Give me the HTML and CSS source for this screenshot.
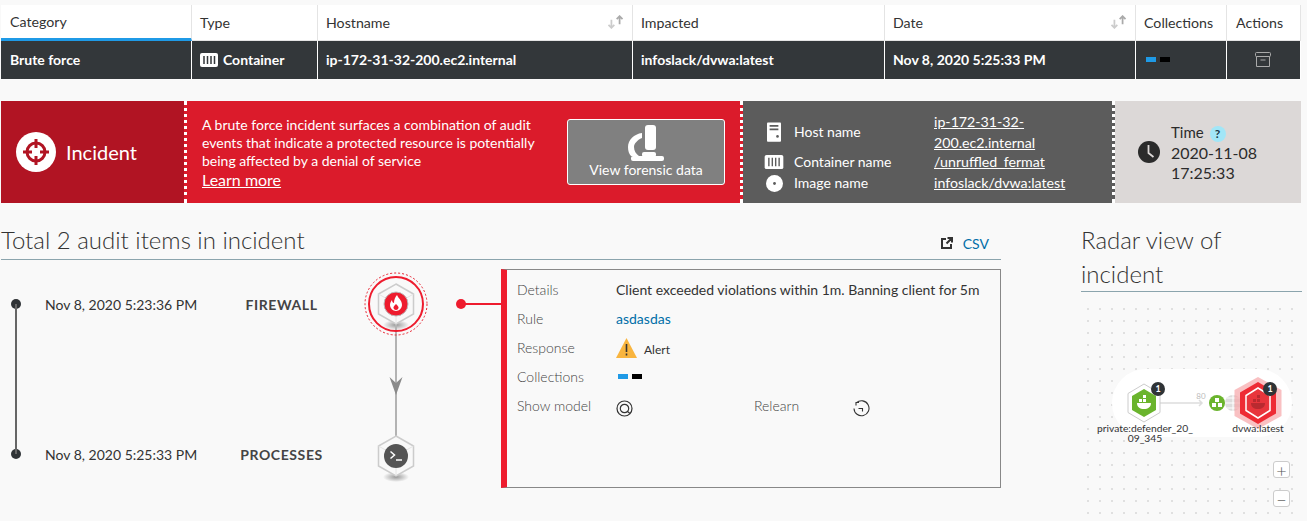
FILE: index.html
```html
<!DOCTYPE html>
<html lang="en">
<head>
    <meta charset="UTF-8">
    <title>Incident</title>
    <link rel="stylesheet" href="styles.css">
</head>
<body>

    <!-- Incident table -->
    <div class="incident-table">
        <div class="cell head active">Category</div>
        <div class="cell head">Type</div>
        <div class="cell head sortable">Hostname
            <svg class="sort-icon" width="17" height="14" viewBox="2 0 13 12"><path d="M5 4v7M2.500 8.500l2.500 2.500 2.500-2.500" fill="none" stroke="#ccc" stroke-width="1.500"/><path d="M12 8V1M9.500 3.500L12 1l2.500 2.500" fill="none" stroke="#aaa" stroke-width="1.500"/></svg>
        </div>
        <div class="cell head">Impacted</div>
        <div class="cell head sortable">Date
            <svg class="sort-icon" width="17" height="14" viewBox="2 0 13 12"><path d="M5 4v7M2.500 8.500l2.500 2.500 2.500-2.500" fill="none" stroke="#ccc" stroke-width="1.500"/><path d="M12 8V1M9.500 3.500L12 1l2.500 2.500" fill="none" stroke="#aaa" stroke-width="1.500"/></svg>
        </div>
        <div class="cell head">Collections</div>
        <div class="cell head last">Actions</div>

        <div class="cell row first">Brute force</div>
        <div class="cell row">
            <svg class="type-icon" width="18" height="14" viewBox="0 0 18 14"><rect width="18" height="14" rx="2" fill="#fff"/><path d="M4 3v8M7.500 3v8M11 3v8M14.500 3v8" stroke="#33373a" stroke-width="1.500"/></svg>
            Container
        </div>
        <div class="cell row">ip-172-31-32-200.ec2.internal</div>
        <div class="cell row">infoslack/dvwa:latest</div>
        <div class="cell row">Nov 8, 2020 5:25:33 PM</div>
        <div class="cell row swatches"><span class="swatch blue"></span><span class="swatch black"></span></div>
        <div class="cell row center">
            <svg width="16" height="15" viewBox="0 0 16 15" fill="none" stroke="#aaa"><rect x="0.500" y="0.500" width="15" height="4" rx="1"/><path d="M1.500 4.500v10h13v-10M5.500 8h5"/></svg>
        </div>
    </div>

    <!-- Incident banner -->
    <div class="banner">
        <div class="banner-title">
            <svg width="40" height="40" viewBox="0 0 40 40">
                <circle cx="20" cy="20" r="20" fill="#fff"/>
                <circle cx="20" cy="20" r="9" fill="none" stroke="#b11423" stroke-width="3"/>
                <path d="M20 7v9M20 24v9M7 20h9M24 20h9" stroke="#b11423" stroke-width="3"/>
            </svg>
            <span>Incident</span>
        </div>
        <div class="banner-desc">
            <div class="desc-text">
                <p>A brute force incident surfaces a combination of audit events that indicate a protected resource is potentially being affected by a denial of service</p>
                <a href="#" class="learn-more">Learn more</a>
            </div>
            <button class="forensic-btn">
                <svg width="36" height="36" viewBox="0 0 36 36" fill="#fff">
                    <rect x="17" y="0" width="11" height="25" rx="3"/>
                    <path d="M14 8v5C9 15 6 19 6 22c0 4 2 7 5 9H3c-2-2-3-5-3-9 0-7 6-13 14-14z"/>
                    <rect x="14" y="27" width="14" height="5" rx="2"/>
                    <rect x="3" y="31" width="33" height="5" rx="2"/>
                </svg>
                View forensic data
            </button>
        </div>
        <div class="banner-info">
            <div class="info-row tall">
                <svg width="14" height="20" viewBox="0 0 16 22"><rect width="16" height="22" rx="1" fill="#fff"/><path d="M3 4h10M3 8h10" stroke="#5c5c5c" stroke-width="2"/><circle cx="12" cy="16" r="1.500" fill="#5c5c5c"/></svg>
                <span class="info-label">Host name</span>
                <a href="#" class="info-value">ip-172-31-32-200.ec2.internal</a>
            </div>
            <div class="info-row">
                <svg width="20" height="14" viewBox="0 0 20 15"><rect width="20" height="15" rx="2" fill="#fff"/><path d="M4.500 3v9M8.200 3v9M11.800 3v9M15.500 3v9" stroke="#5c5c5c" stroke-width="1.500"/></svg>
                <span class="info-label">Container name</span>
                <a href="#" class="info-value">/unruffled_fermat</a>
            </div>
            <div class="info-row">
                <svg width="17" height="17" viewBox="0 0 18 18"><circle cx="9" cy="9" r="9" fill="#fff"/><circle cx="9" cy="9" r="1.500" fill="#5c5c5c"/></svg>
                <span class="info-label">Image name</span>
                <a href="#" class="info-value">infoslack/dvwa:latest</a>
            </div>
        </div>
        <div class="banner-time">
            <svg width="22" height="22" viewBox="0 0 22 22"><circle cx="11" cy="11" r="11" fill="#2b2b2b"/><path d="M10.500 4v8l5 4" fill="none" stroke="#dcd8d7" stroke-width="1.800"/></svg>
            <div>
                <div class="time-label">Time <span class="help">?</span></div>
                <div class="time-value">2020-11-08<br>17:25:33</div>
            </div>
        </div>
    </div>

    <div class="lower">
        <!-- Audit items -->
        <div class="audit">
            <div class="section-head">
                <h2>Total 2 audit items in incident</h2>
                <a href="#" class="csv">
                    <svg width="12" height="12" viewBox="0 0 12 12" fill="none" stroke="#333" stroke-width="2"><path d="M5 2H1v9h9V7M6.500 1H11v4.500M11 1L5.500 6.500"/></svg>
                    CSV
                </a>
            </div>
            <div class="audit-body">
                <div class="audit-rows">
                    <div class="audit-row"><span class="dot"></span><span class="audit-date">Nov 8, 2020 5:23:36 PM</span><span class="audit-type">FIREWALL</span></div>
                    <div class="audit-row"><span class="dot"></span><span class="audit-date">Nov 8, 2020 5:25:33 PM</span><span class="audit-type">PROCESSES</span></div>
                </div>
                <svg class="trail" width="80" height="220" viewBox="0 0 80 220">
                    <defs>
                        <radialGradient id="shade"><stop offset="0" stop-color="#999"/><stop offset="1" stop-color="#999" stop-opacity="0"/></radialGradient>
                    </defs>
                    <ellipse cx="40" cy="56" rx="13" ry="5" fill="url(#shade)"/>
                    <ellipse cx="40" cy="208" rx="13" ry="5" fill="url(#shade)"/>
                    <path d="M40 55v115" stroke="#b3b3b3" stroke-width="2"/>
                    <path d="M33.500 108L40 114l6.500-6L40 126z" fill="#8a8a8a"/>
                    <circle cx="40" cy="35" r="31" fill="none" stroke="#e8202f" stroke-dasharray="2 2"/>
                    <circle cx="40" cy="35" r="27" fill="none" stroke="#ee1c2e" stroke-width="2"/>
                    <polygon points="40,15 57.500,25 57.500,45 40,55 22.500,45 22.500,25" fill="#f9f9f9" stroke="#ccc" stroke-width="1.500"/>
                    <path d="M22.500 25L40 35l17.500-10M40 35v20" fill="none" stroke="#e4e4e4"/>
                    <circle cx="40" cy="35" r="12" fill="#ee1c2e" stroke="#bbb"/>
                    <path d="M41 26c1 3 5 5 5 10 0 3-3 6-6 6s-6-3-6-6c0-2 1-4 2-5 0 2 1 3 2 3 0-3 1-6 3-8z" fill="#fff"/>
                    <path d="M40 41c-1.500 0-2.500-1-2.500-2.500 0-1 1-2 2.500-3.500 1.500 1.500 2.500 2.500 2.500 3.500 0 1.500-1 2.500-2.500 2.500z" fill="#ee1c2e"/>
                    <polygon points="40,167 57.500,177 57.500,197 40,207 22.500,197 22.500,177" fill="#f9f9f9" stroke="#ccc" stroke-width="1.500"/>
                    <path d="M22.500 177l17.500 10 17.500-10M40 187v20" fill="none" stroke="#e4e4e4"/>
                    <circle cx="40" cy="187" r="12" fill="#555"/>
                    <path d="M34.500 182.500l4 3.500-4 3.500" fill="none" stroke="#fff" stroke-width="1.500"/>
                    <path d="M40 191h6" stroke="#fff" stroke-width="1.500"/>
                </svg>
                <div class="connector"><span class="connector-dot"></span></div>
                <div class="details">
                    <span class="detail-label">Details</span>
                    <span class="detail-value wide">Client exceeded violations within 1m. Banning client for 5m</span>
                    <span class="detail-label">Rule</span>
                    <a href="#" class="rule-link wide">asdasdas</a>
                    <span class="detail-label">Response</span>
                    <span class="detail-value wide alert">
                        <svg width="21" height="20" viewBox="0 0 21 20"><polygon points="10.500,0 21,20 0,20" fill="#f9b53f"/><path d="M10.500 6v8M10.500 15.500v2" stroke="#333" stroke-width="1.600"/></svg>
                        <span class="alert-text">Alert</span>
                    </span>
                    <span class="detail-label">Collections</span>
                    <span class="detail-value wide swatch-row"><span class="swatch blue"></span><span class="swatch black"></span></span>
                    <span class="detail-label">Show model</span>
                    <svg class="detail-icon" width="17" height="17" viewBox="0 0 17 17" fill="none" stroke="#333" stroke-width="1.200"><circle cx="8.500" cy="8.500" r="7.500"/><circle cx="8.500" cy="8.500" r="4.200"/><path d="M11.500 11.500l2.500 2"/></svg>
                    <span class="detail-label">Relearn</span>
                    <svg class="detail-icon" width="17" height="17" viewBox="0 0 17 17" fill="none" stroke="#333" stroke-width="1.100"><path d="M3.500 2.700A7.500 7.500 0 1 1 1 8.500"/><path d="M3 5.500V2.500h3M5.500 8.500h4v3"/></svg>
                </div>
            </div>
        </div>

        <!-- Radar -->
        <div class="radar-panel">
            <h2 class="radar-title">Radar view of incident</h2>
            <div class="radar">
                <svg class="radar-graph" width="222" height="214" viewBox="0 0 222 214">
                    <rect x="27" y="64" width="180" height="68" rx="34" fill="#fff"/>
                    <path d="M75 98h42M114 95l3 3-3 3" fill="none" stroke="#ddd" stroke-width="1.500"/>
                    <text x="116" y="94" class="edge-label">80</text>
                    <polygon points="59,79 75,88.500 75,107.500 59,117 43,107.500 43,88.500" fill="none" stroke="#ccc"/>
                    <polygon points="59,84 71,91 71,105 59,112 47,105 47,91" fill="#6ab42d"/>
                    <path d="M52 98h14c0 4-3 6-7 6s-7-2-7-6zM54 94h3v3h-3zM58 94h3v3h-3zM58 90h3v3h-3z" fill="#fff"/>
                    <circle cx="132" cy="98" r="8" fill="#6ab42d"/>
                    <path d="M127 98h4v4h-4zM133 98h4v4h-4zM130 93h4v4h-4z" fill="#fff"/>
                    <circle cx="148" cy="98" r="8" fill="#ddd"/>
                    <path d="M140 98h16M148 90v16M142 93h12M142 103h12" stroke="#fff"/>
                    <polygon points="173,72 196.500,85 196.500,111 173,124 149.500,111 149.500,85" fill="#f6a5a8" opacity="0.700"/>
                    <polygon points="173,77 191,87.500 191,108.500 173,119 155,108.500 155,87.500" fill="#ee2b34"/>
                    <polygon points="173,83 185,90.500 185,105.500 173,113 161,105.500 161,90.500" fill="#e8353c" stroke="#fff" stroke-width="1.500"/>
                    <path d="M166 98h14c0 4-3 6-7 6s-7-2-7-6zM168 94h3v3h-3zM172 94h3v3h-3zM172 90h3v3h-3z" fill="#b92a30"/>
                    <circle cx="73" cy="84" r="7" fill="#2f3336"/>
                    <text x="73" y="87" class="badge-text">1</text>
                    <circle cx="185" cy="84" r="7" fill="#2f3336"/>
                    <text x="185" y="87" class="badge-text">1</text>
                    <text x="60" y="127" class="node-label">private:defender_20_</text>
                    <text x="60" y="137" class="node-label">09_345</text>
                    <text x="173" y="127" class="node-label">dvwa:latest</text>
                </svg>
                <button class="zoom-btn plus">+</button>
                <button class="zoom-btn minus">&minus;</button>
            </div>
        </div>
    </div>

</body>
</html>
```

FILE: styles.css
```css
body {
    font-family: 'Lato', sans-serif;
    background-color: #f9f9f9;
    color: #333;
    margin: 0;
    height: 521px;
    overflow: hidden;
}

/* table */
.incident-table {
    display: grid;
    grid-template-columns: 191px 126px 315px 252px 251px 91px 74px;
    grid-template-rows: 36px 38px;
    margin: 5px 0 0 1px;
    width: 1300px;
}

.cell {
    display: flex;
    align-items: center;
    padding: 0 8px;
    font-size: 14.2px;
    box-sizing: border-box;
    border-right: 1px solid #e4e4e4;
}

.cell:first-child,
.row.first {
    padding-left: 9px;
}

.head {
    background-color: #fff;
    color: #333;
    border-bottom: 1px solid #e4e4e4;
    padding-bottom: 1px;
}

.head.active {
    border-bottom: 3px solid #1f9ae6;
    padding-bottom: 0;
}

.head.last {
    padding-left: 9px;
}

.sortable {
    justify-content: space-between;
}

.row {
    background-color: #33373a;
    color: #fff;
    font-weight: bold;
    font-size: 14px;
    border-right: 1px solid #fff;
    padding-bottom: 2px;
}

.center {
    justify-content: center;
    padding-right: 9px;
}

.type-icon {
    margin: 2px 5px 0 0;
}

.swatches {
    padding-left: 10px;
}

.swatch {
    display: inline-block;
    width: 10px;
    height: 5px;
    margin-right: 4px;
}

.blue {
    background-color: #1f9ae6;
}

.black {
    background-color: #000;
}

/* banner */
.banner {
    display: flex;
    margin: 22px 0 0 1px;
    width: 1300px;
    height: 102px;
    color: #fff;
}

.banner-title {
    width: 183px;
    background-color: #b11423;
    display: flex;
    align-items: center;
    gap: 10px;
    padding-left: 15px;
    box-sizing: border-box;
    font-size: 20px;
}

.banner-desc {
    width: 559px;
    background-color: #db1b2b;
    border-left: 3px dotted #fff;
    border-right: 3px dotted #fff;
    display: flex;
    align-items: center;
    box-sizing: border-box;
    padding: 0 15px 0 15px;
    justify-content: space-between;
}

.desc-text {
    width: 350px;
    font-size: 14px;
    line-height: 18px;
    padding-top: 2px;
}

.desc-text p {
    margin: 0;
}

.learn-more {
    color: #fff;
    font-size: 16px;
    line-height: 20px;
}

.forensic-btn {
    width: 158px;
    height: 66px;
    background-color: #808080;
    border: 1px solid #fff;
    border-radius: 3px;
    color: #fff;
    font-family: inherit;
    font-size: 14px;
    display: flex;
    flex-direction: column;
    align-items: center;
    padding: 5px 0 0;
}

.banner-info {
    width: 372px;
    background-color: #5c5c5c;
    border-right: 3px dotted #fff;
    box-sizing: border-box;
    font-size: 14px;
    display: flex;
    flex-direction: column;
    gap: 3px;
    padding-top: 10px;
}

.info-row {
    display: grid;
    grid-template-columns: 20px 140px 180px;
    padding-left: 21px;
    align-items: center;
    line-height: 18px;
}

.info-row svg {
    justify-self: center;
}

.info-label {
    margin-left: 10px;
}

.info-row.tall {
    line-height: 21px;
    margin-bottom: -3px;
}

.tall .info-label {
    margin-top: -2px;
}

.info-value {
    color: #fff;
    font-size: 14.2px;
    margin-left: 10px;
}

.banner-time {
    flex: 1;
    background-color: #dcd8d7;
    color: #2b2b2b;
    display: flex;
    align-items: center;
    gap: 11px;
    padding-left: 23px;
}

.time-label {
    font-size: 15px;
    line-height: 21px;
}

.help {
    display: inline-block;
    width: 16px;
    height: 16px;
    margin-left: 2px;
    border-radius: 50%;
    background-color: #a2e6f7;
    color: #1a3a4a;
    font-size: 12px;
    font-weight: bold;
    line-height: 16px;
    text-align: center;
}

.time-value {
    font-size: 16px;
    line-height: 20px;
}

/* lower part */
.lower {
    display: flex;
    margin: 8px 0 0 1px;
}

.audit {
    width: 1000px;
}

.section-head {
    display: flex;
    align-items: center;
    justify-content: space-between;
    height: 36px;
    padding-top: 12px;
    border-bottom: 1px solid #8ba4ad;
}

h2 {
    margin: 0;
    font-weight: 300;
    font-size: 24px;
    color: #333;
}

.section-head h2 {
    margin-bottom: 4px;
}

.csv {
    display: flex;
    align-items: center;
    gap: 10px;
    color: #006ea8;
    font-size: 14px;
    margin: 4px 12px 0 0;
    text-decoration: none;
}

.audit-body {
    display: flex;
    height: 220px;
    margin-top: 9px;
}

.audit-rows {
    position: relative;
    width: 355px;
    display: flex;
    flex-direction: column;
    gap: 80px;
}

.audit-rows::before {
    content: "";
    position: absolute;
    left: 14px;
    top: 35px;
    width: 2px;
    height: 150px;
    background-color: #666;
}

.audit-row {
    height: 70px;
    display: grid;
    grid-template-columns: 44px 160px 150px;
    align-items: center;
    font-size: 14px;
}

.dot {
    width: 10px;
    height: 10px;
    background-color: #2f3336;
    border-radius: 50%;
    margin-left: 10px;
}

.audit-type {
    font-weight: bold;
    letter-spacing: 0.6px;
    color: #444;
    text-align: center;
    padding-left: 3px;
}

.connector {
    position: relative;
    width: 65px;
    height: 70px;
    display: flex;
    align-items: center;
    justify-content: flex-end;
}

.connector::before {
    content: "";
    width: 40px;
    height: 2px;
    background-color: #ee1c2e;
}

.connector-dot {
    position: absolute;
    left: 20px;
    top: 30px;
    width: 10px;
    height: 10px;
    background-color: #ee1c2e;
    border-radius: 50%;
}

.details {
    width: 500px;
    height: 219px;
    box-sizing: border-box;
    border: 1px solid #888;
    border-left: 6px solid #ee1c2e;
    padding: 5px 0 0 10px;
    display: grid;
    grid-template-columns: 99px 138px 99px 1fr;
    grid-auto-rows: 29px;
    align-items: center;
    font-size: 14px;
}

.detail-label {
    color: #444;
    font-weight: 300;
}

.wide {
    grid-column: span 3;
}

.detail-value {
    color: #333;
}

.alert {
    display: flex;
    align-items: center;
    gap: 7px;
    font-size: 12px;
}

.alert-text {
    margin-top: 3px;
}

.swatch-row {
    display: flex;
    padding-left: 2px;
}

.rule-link {
    color: #006ea8;
    text-decoration: none;
}

.detail-icon {
    margin-top: 6px;
}

/* radar */
.radar-panel {
    width: 221px;
    margin-left: 80px;
}

.radar-title {
    padding-top: 12px;
    line-height: 34px;
    border-bottom: 1px solid #8ba4ad;
}

.radar {
    position: relative;
    height: 214px;
    margin-top: 13px;
    background-image: radial-gradient(circle, #e0e0e0 0.8px, transparent 1.1px);
    background-size: 12px 12px;
    background-position: 1px -2px;
}

.radar-graph {
    position: absolute;
    left: 4px;
    top: 0;
}

.edge-label {
    font-size: 8px;
    fill: #bbb;
    text-anchor: middle;
}

.badge-text {
    font-size: 9px;
    fill: #fff;
    text-anchor: middle;
    font-weight: bold;
}

.node-label {
    font-size: 10.3px;
    fill: #333;
    text-anchor: middle;
}

.zoom-btn {
    position: absolute;
    left: 192px;
    width: 17px;
    height: 17px;
    padding: 0;
    border: 1px solid #ccc;
    border-radius: 3px;
    background-color: #fff;
    color: #555;
    font-family: inherit;
    font-size: 18px;
    font-weight: 300;
    line-height: 14px;
}

.plus {
    top: 156px;
}

.minus {
    top: 185px;
}
```
